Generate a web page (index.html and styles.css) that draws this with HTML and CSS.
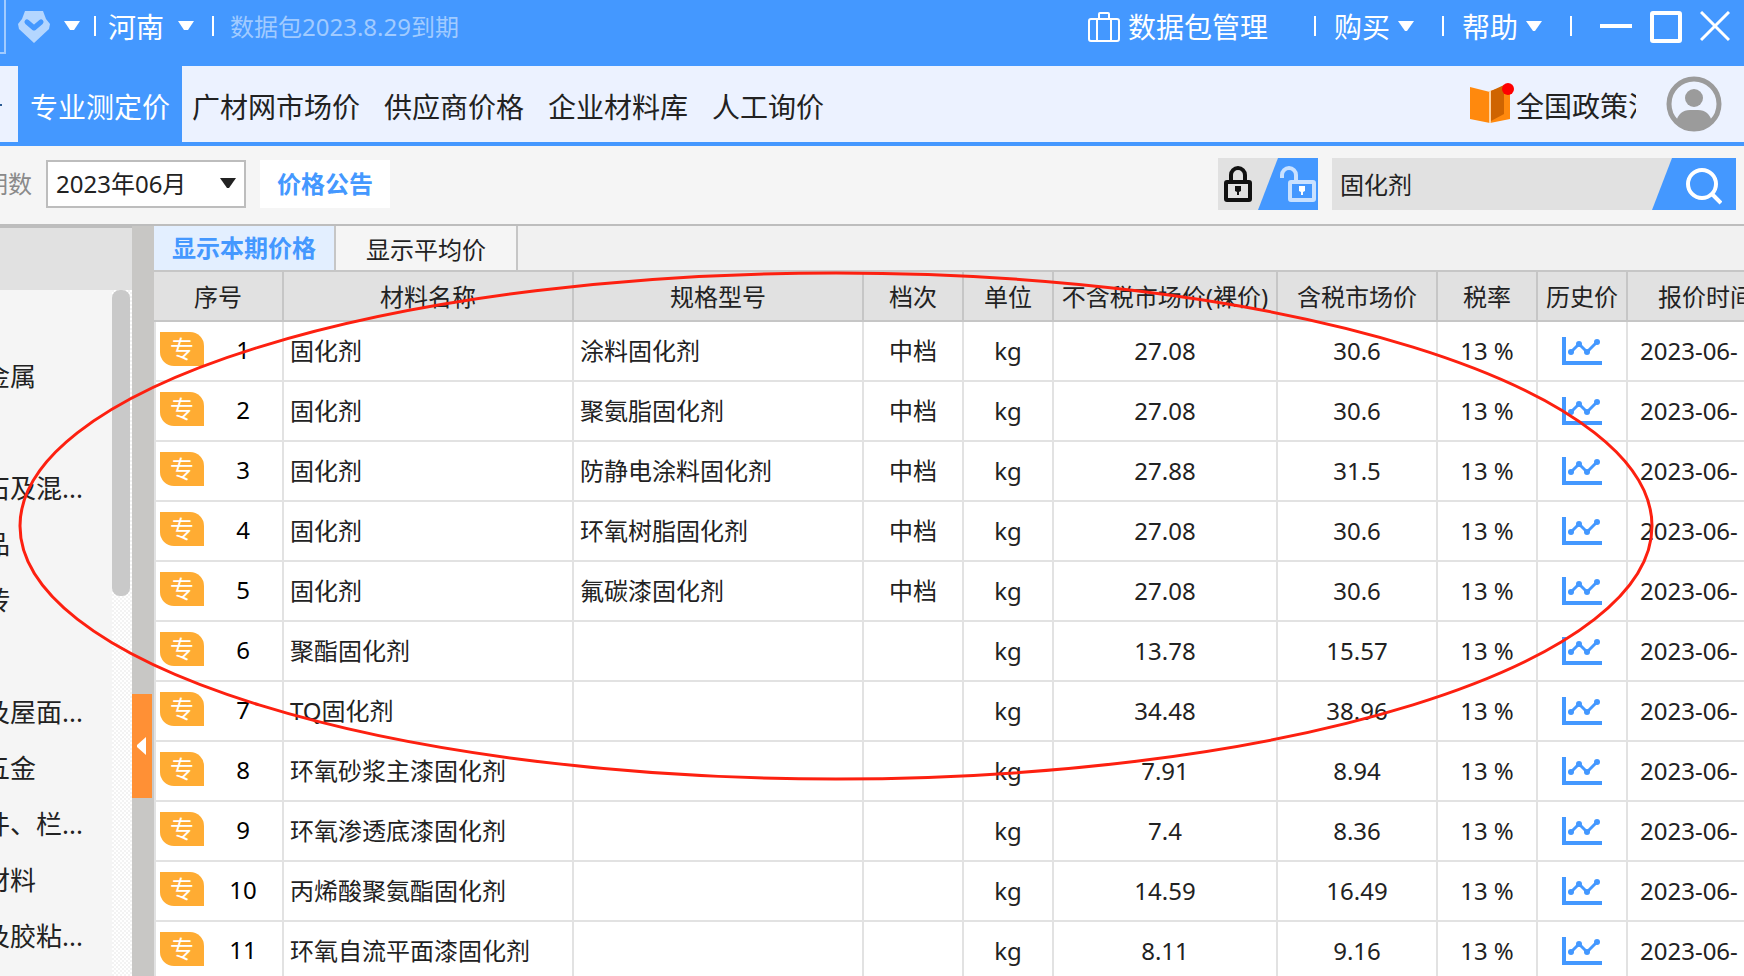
FILE: index.html
```html
<!DOCTYPE html>
<html lang="zh-CN">
<head>
<meta charset="utf-8">
<title>专业测定价</title>
<link rel="stylesheet" href="styles.css">
</head>
<body>
<header class="titlebar">
  <div class="titlebar-left">
    <span class="frame-edge"></span>
    <button class="bar-btn brand" aria-label="会员">
      <svg width="32" height="32" viewBox="0 0 32 32"><path d="M7 0h18l3 8 4 5-1 5-15 14L1 18l-1-5 4-5z" fill="#b4d6ff"/><path d="M9 11l7 6 7-6" fill="none" stroke="#4498ff" stroke-width="5" stroke-linejoin="round" stroke-linecap="round"/></svg>
      <svg class="caret" width="16" height="10" viewBox="0 0 16 10"><path d="M0 0h16L10 9H6z"/></svg>
    </button>
    <span class="sep"></span>
    <button class="bar-btn region">河南
      <svg class="caret" width="16" height="10" viewBox="0 0 16 10"><path d="M0 0h16L10 9H6z"/></svg>
    </button>
    <span class="sep"></span>
    <span class="expiry">数据包2023.8.29到期</span>
  </div>
  <div class="titlebar-right">
    <button class="bar-btn package">
      <svg width="32" height="32" viewBox="0 0 32 32" fill="none" stroke="#fff" stroke-width="2"><rect x="1" y="8" width="30" height="22" rx="2"/><path d="M9 30V8M23 30V8M11 8V3q0-1 1-1h8q1 0 1 1v5"/></svg>数据包管理</button>
    <span class="sep"></span>
    <button class="bar-btn menu">购买
      <svg class="caret" width="16" height="10" viewBox="0 0 16 10"><path d="M0 0h16L9 10H7z"/></svg>
    </button>
    <span class="sep"></span>
    <button class="bar-btn menu">帮助
      <svg class="caret" width="16" height="10" viewBox="0 0 16 10"><path d="M0 0h16L9 10H7z"/></svg>
    </button>
    <span class="sep"></span>
    <div class="window-controls">
      <button class="bar-btn" aria-label="最小化"><svg width="32" height="32" viewBox="0 0 32 32"><path d="M0 15h32" stroke="#fff" stroke-width="4"/></svg></button>
      <button class="bar-btn" aria-label="最大化"><svg width="32" height="32" viewBox="0 0 32 32"><rect x="2" y="2" width="28" height="28" rx="1" fill="none" stroke="#fff" stroke-width="4"/></svg></button>
      <button class="bar-btn" aria-label="关闭"><svg width="30" height="32" viewBox="0 0 30 32"><path d="M1 1l28 28M29 1L1 29" stroke="#fff" stroke-width="3"/></svg></button>
    </div>
  </div>
</header>

<nav class="nav">
  <div class="nav-tabs">
    <span class="nav-stub"></span>
    <a class="nav-tab active" href="#">专业测定价</a>
    <a class="nav-tab" href="#">广材网市场价</a>
    <a class="nav-tab" href="#">供应商价格</a>
    <a class="nav-tab" href="#">企业材料库</a>
    <a class="nav-tab" href="#">人工询价</a>
  </div>
  <div class="nav-right">
    <a class="policy" href="#">
      <svg width="46" height="42" viewBox="0 0 46 42"><path d="M0 4l20 5v31L0 36z" fill="#ff890d"/><path d="M20 8L40 2v34l-20 4z" fill="#ff890d"/><path d="M21 8l13-6v29l-13 7z" fill="#cf6400"/><path d="M20 8v32" stroke="#ffd3a0" stroke-width="2"/><circle cx="38" cy="6" r="6" fill="#f00"/></svg>
      <span class="policy-text">全国政策法规</span>
    </a>
    <button class="avatar" aria-label="用户">
      <svg width="56" height="56" viewBox="0 0 56 56"><circle cx="28" cy="28" r="25" fill="#ecf2ff" stroke="#9b9b9b" stroke-width="5"/><circle cx="28" cy="22" r="9" fill="#9b9b9b"/><path d="M10 46q3-12 14-12h8q11 0 14 12-8 9-18 9t-18-9z" fill="#9b9b9b"/></svg>
    </button>
  </div>
</nav>

<section class="toolbar">
  <label class="period-label" for="period">期数</label>
  <div class="period">
    <select id="period"><option>2023年06月</option></select>
    <svg class="period-arrow" width="16" height="10" viewBox="0 0 16 10"><path d="M0 0h16L9 10H7z" fill="#222"/></svg>
  </div>
  <button class="notice">价格公告</button>
  <div class="toolbar-right">
    <button class="lock-switch" aria-label="锁定切换">
      <svg width="100" height="52" viewBox="0 0 100 52"><path fill="#e1e1e1" d="M0 0h100v52H0z"/><path fill="#4498ff" d="M60 0h40v52H40z"/>
        <g fill="none" stroke="#111" stroke-width="4"><rect x="8" y="24" width="24" height="18" rx="1"/><path d="M13 23v-6a7 7 0 0 1 14 0v6"/></g><path d="M17 28h6v5l-2 1v3h-2v-3l-2-1z" fill="#111"/>
        <g fill="none" stroke="#c9e1ff" stroke-width="4"><rect x="72" y="24" width="24" height="18" rx="1"/><path d="M64 20v-3a7 7 0 0 1 14 0v6"/></g><path d="M81 28h6v5l-2 1v3h-2v-3l-2-1z" fill="#fff"/></svg>
    </button>
    <form class="search">
      <input type="text" aria-label="搜索" value="固化剂">
      <button type="button" aria-label="查询"><svg width="36" height="38" viewBox="0 0 36 38" fill="none" stroke="#fff"><circle cx="16" cy="17" r="14" stroke-width="4"/><path d="M26 27l9 9" stroke-width="4"/></svg></button>
    </form>
  </div>
</section>

<main class="workspace">
  <aside class="sidebar">
    <div class="sidebar-head"></div>
    <div class="sidebar-body">
      <ul class="tree">
        <li></li><li>金属</li><li></li><li>石及混...</li><li>品</li><li>砖</li><li></li><li>及屋面...</li><li>五金</li><li>件、栏...</li><li>材料</li><li>及胶粘...</li>
      </ul>
      <div class="scroll-track"><div class="scroll-thumb"></div></div>
    </div>
  </aside>
  <div class="splitter">
    <button class="collapse" aria-label="收起"><svg width="10" height="18" viewBox="0 0 10 18"><path d="M9 0v18L0 10V8z" fill="#fff"/></svg></button>
  </div>
  <section class="content">
    <div class="view-tabs">
      <button class="view-tab active">显示本期价格</button>
      <button class="view-tab">显示平均价</button>
    </div>
    <table class="prices">
      <colgroup><col class="c-no"><col class="c-wide"><col class="c-wide"><col class="c-grade"><col class="c-unit"><col class="c-net"><col class="c-gross"><col class="c-grade"><col class="c-unit"><col></colgroup>
      <thead><tr><th>序号</th><th>材料名称</th><th>规格型号</th><th>档次</th><th>单位</th><th>不含税市场价(裸价)</th><th>含税市场价</th><th>税率</th><th>历史价</th><th class="date-head">报价时间</th></tr></thead>
      <tbody id="rows"></tbody>
    </table>
  </section>
</main>
<svg class="marker" width="1640" height="512" viewBox="0 0 1640 512" aria-hidden="true"><ellipse cx="820" cy="256" rx="816" ry="253" fill="none" stroke="#fd2010" stroke-width="3"/></svg>
<script src="app.js"></script>
</body>
</html>
```

FILE: styles.css
```css
* { box-sizing: border-box; }

body {
  margin: 0;
  height: 100vh;
  overflow: hidden;
  display: flex;
  flex-direction: column;
  position: relative;
  background: #f5f5f5;
  color: #222;
  font-family: "Noto Sans", "Noto Sans CJK SC", sans-serif;
  font-size: 24px;
  line-height: 32px;
}

button, input, select { font: inherit; color: inherit; border: 0; padding: 0; margin: 0; background: none; border-radius: 0; }
button { cursor: pointer; }
a { color: inherit; text-decoration: none; }
svg { display: block; flex: none; }

/* Title bar */
.titlebar {
  flex: none;
  display: flex;
  justify-content: space-between;
  height: 66px;
  padding-bottom: 12px;
  background: #4498ff;
  color: #fff;
  font-size: 28px;
  white-space: nowrap;
}
.titlebar-left, .titlebar-right { display: flex; align-items: center; }
.titlebar-right { padding-right: 14px; }
.frame-edge { align-self: stretch; width: 6px; border: solid #a1cbff; border-width: 0 2px 2px 0; margin-right: 12px; }
.bar-btn { display: flex; align-items: center; }
.brand { gap: 14px; margin-right: 14px; }
.region { gap: 14px; margin: 0 18px 0 12px; }
.caret { fill: #fff; margin-bottom: 2px; }
.sep { width: 2px; height: 20px; background: #fff; margin-bottom: 2px; }
.expiry { margin-left: 16px; font-size: 24px; color: #a1cbff; }
.package { gap: 8px; margin-right: 46px; }
.menu { gap: 8px; margin: 0 28px 0 18px; }
.window-controls { display: flex; gap: 18px; margin-left: 28px; }

/* Primary navigation */
.nav {
  flex: none;
  display: flex;
  justify-content: space-between;
  height: 80px;
  background: #ecf2ff;
  border-bottom: 4px solid #4498ff;
  font-size: 28px;
  white-space: nowrap;
}
.nav-tabs { display: flex; }
.nav-stub { width: 18px; background: linear-gradient(#2b5c94, #2b5c94) 0 38px / 2px 2px no-repeat; }
.nav-tab { display: flex; align-items: center; padding: 6px 12px 0; }
.nav-tab.active { background: #4498ff; color: #fff; margin-right: -2px; }
.nav-right { display: flex; align-items: center; padding-right: 22px; }
.policy { display: flex; align-items: center; }
.policy-text { width: 120px; overflow: hidden; line-height: 40px; padding-top: 4px; }
.avatar { margin-left: 30px; }

/* Filter toolbar */
.toolbar {
  flex: none;
  display: flex;
  align-items: center;
  height: 80px;
  padding: 0 8px 2px 0;
  border-bottom: 2px solid #bdbdbd;
}
.period-label { margin-left: -16px; color: #8a8a8a; }
.period { position: relative; margin: 0 14px; }
.period select { appearance: none; width: 200px; height: 48px; padding-left: 8px; background: #fff; border: 2px solid #bdbdbd; }
.period-arrow { position: absolute; right: 10px; top: 18px; pointer-events: none; }
.notice { width: 130px; height: 48px; background: #fff; color: #4498ff; font-weight: bold; }
.toolbar-right { display: flex; gap: 14px; margin-left: auto; }
.search { display: flex; width: 404px; height: 52px; background: #e1e1e1; }
.search input { flex: 1; min-width: 0; padding: 2px 0 0 8px; outline: 0; }
.search button { display: grid; place-items: center; width: 84px; padding: 4px 0 0 20px; background: #4498ff; clip-path: polygon(20px 0, 100% 0, 100% 100%, 0 100%); }

/* Workspace */
.workspace { flex: 1; min-height: 0; display: flex; }
.sidebar { flex: none; width: 132px; display: flex; flex-direction: column; }
.sidebar-head { flex: none; height: 64px; background: #e1e1e1; border-top: 2px solid #bdbdbd; }
.sidebar-body { flex: 1; min-height: 0; display: flex; overflow: hidden; }
.tree { flex: 1; margin: 0; padding: 2px 0 0; list-style: none; white-space: nowrap; font-size: 26px; overflow: hidden; }
.tree li { height: 56px; line-height: 56px; text-indent: -16px; }
.scroll-track { width: 20px; padding-right: 2px; background: repeating-conic-gradient(#fff 0 25%, #f3f3f3 0 50%) 0 0 / 4px 4px; }
.scroll-thumb { height: 306px; border-radius: 8px; background: #c9c9c9; }
.splitter { flex: none; width: 22px; background: #c8c7c5; }
.collapse { display: grid; place-items: center; width: 20px; height: 104px; margin-top: 468px; background: #ff9035; }

.content { flex: 1; min-width: 0; overflow: hidden; background: #f1f1f1; }
.view-tabs { display: flex; height: 44px; }
.view-tab { width: 182px; padding-top: 4px; background: #f5f5f5; border-right: 2px solid #c6c6c6; }
.view-tab.active { padding-top: 0; background: #e3efff; color: #4498ff; font-weight: bold; }

/* Price table */
.prices { table-layout: fixed; width: 100%; min-width: 1626px; border-collapse: separate; border-spacing: 0; background: #fff; white-space: nowrap; }
.c-no { width: 130px; }
.c-wide { width: 290px; }
.c-grade { width: 100px; }
.c-unit { width: 90px; }
.c-net { width: 224px; }
.c-gross { width: 160px; }
.prices th { height: 52px; padding: 2px 0 0; background: #e1e1e1; border: solid #c6c6c6; border-width: 2px 2px 2px 0; font-weight: normal; }
.prices td { height: 60px; padding: 0; border: solid #e2e2e2; border-width: 0 2px 2px 0; text-align: center; }
.prices td:first-child { border-left-width: 2px; }
.prices td.text { text-align: left; padding-left: 6px; }
.prices td.date { text-align: left; padding-left: 12px; }
.prices th.date-head { text-align: left; padding-left: 30px; }
.no-cell { display: flex; align-items: center; padding-left: 4px; color: #000; }
.badge { width: 44px; height: 34px; line-height: 34px; margin-bottom: 4px; border-radius: 0 14px 0 14px; background: #ffac33; color: #fff; }
.no-cell .num { width: 78px; margin-bottom: 2px; }
.chart { display: block; margin: 0 auto; }

/* Annotation drawn over the table */
.marker { position: absolute; left: 16px; top: 270px; pointer-events: none; }
```

FILE: app.js
```js
const rows = [
  ['固化剂', '涂料固化剂', '中档', '27.08', '30.6'],
  ['固化剂', '聚氨脂固化剂', '中档', '27.08', '30.6'],
  ['固化剂', '防静电涂料固化剂', '中档', '27.88', '31.5'],
  ['固化剂', '环氧树脂固化剂', '中档', '27.08', '30.6'],
  ['固化剂', '氟碳漆固化剂', '中档', '27.08', '30.6'],
  ['聚酯固化剂', '', '', '13.78', '15.57'],
  ['TQ固化剂', '', '', '34.48', '38.96'],
  ['环氧砂浆主漆固化剂', '', '', '7.91', '8.94'],
  ['环氧渗透底漆固化剂', '', '', '7.4', '8.36'],
  ['丙烯酸聚氨酯固化剂', '', '', '14.59', '16.49'],
  ['环氧自流平面漆固化剂', '', '', '8.11', '9.16']
];
const chart = '<button class="chart" aria-label="历史价"><svg width="40" height="28" viewBox="0 0 40 28"><path d="M2 0v26h38" fill="none" stroke="#4498ff" stroke-width="4"/><path d="M9 15l8-8 8 8L35 5" fill="none" stroke="#4498ff" stroke-width="3"/><g fill="#4498ff"><circle cx="9" cy="15" r="3"/><circle cx="17" cy="7" r="3"/><circle cx="25" cy="15" r="3"/><circle cx="35" cy="5" r="3"/></g></svg></button>';
document.getElementById('rows').innerHTML = rows.map(([name, spec, grade, net, gross], i) => `<tr>
<td><div class="no-cell"><span class="badge">专</span><span class="num">${i + 1}</span></div></td>
<td class="text">${name}</td><td class="text">${spec}</td><td>${grade}</td><td>kg</td>
<td>${net}</td><td>${gross}</td><td>13 %</td><td>${chart}</td><td class="date">2023-06-</td></tr>`).join('');
```
